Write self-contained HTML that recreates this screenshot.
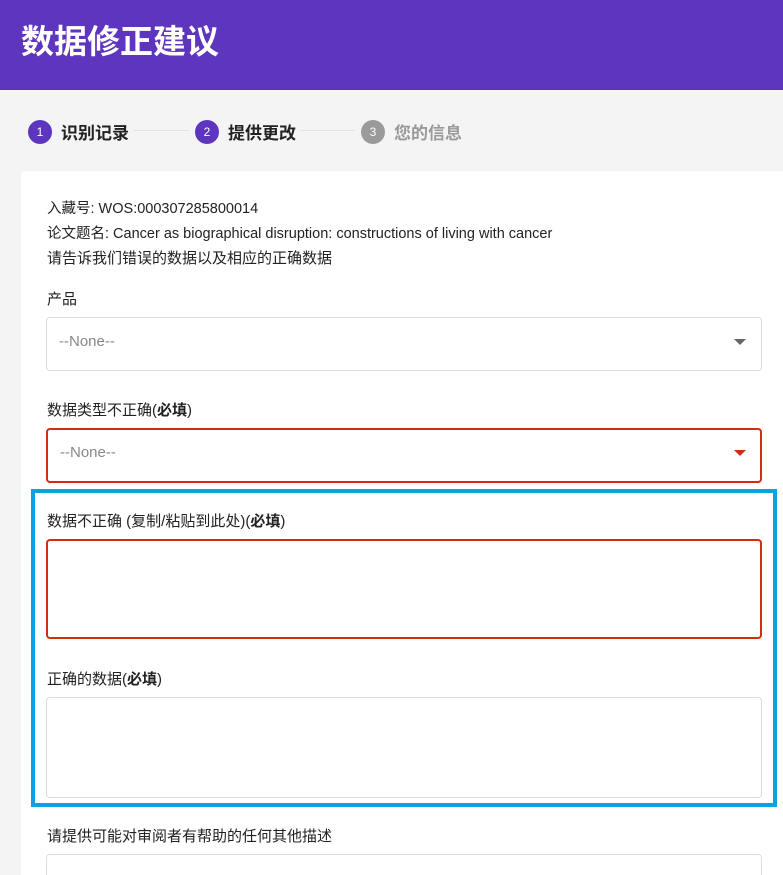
<!DOCTYPE html>
<html><head><meta charset="utf-8"><style>
*{box-sizing:border-box;margin:0;padding:0}
html{width:783px;height:875px;overflow:hidden}
body{width:783px;height:875px;overflow:hidden;background:#f4f4f4;font-family:"Liberation Sans","Noto Sans CJK SC",sans-serif;color:#222;position:relative}
.hdr{position:absolute;left:0;top:0;width:783px;height:90px;background:#5e35bf}
.hdr h1{position:absolute;left:21px;top:15px;color:#fff;font-size:33px;font-weight:bold}
.step{position:absolute;top:119px;display:flex;align-items:center;font-size:17px;font-weight:bold}
.c{width:24px;height:24px;border-radius:50%;background:#5e35bf;color:#fff;font-size:12px;font-weight:normal;display:flex;align-items:center;justify-content:center;margin-right:9px}
.line{position:absolute;top:130px;height:1px;background:#e2e2e2}
.card{position:absolute;left:21px;top:171px;width:762px;height:704px;background:#fff;border-radius:4px 0 0 0}
.t{position:absolute;left:47px;font-size:15px;line-height:20px}
.box{position:absolute;left:46px;width:716px;border:1px solid #ddd;border-radius:4px;background:#fff}
.red{border:2px solid #d42c0e}
.none{position:absolute;left:12px;top:15px;color:#888;font-size:15px}
.arr{position:absolute;right:15px;top:21px;width:0;height:0;border-left:6px solid transparent;border-right:6px solid transparent;border-top:6px solid #666}
.blue{position:absolute;left:31px;top:489px;width:746px;height:318px;border:4px solid #0aa2e0}
</style></head><body>
<div class="hdr"><h1>数据修正建议</h1></div>
<div class="step" style="left:28px"><div class="c">1</div>识别记录</div>
<div class="line" style="left:134px;width:55px"></div>
<div class="step" style="left:195px"><div class="c">2</div>提供更改</div>
<div class="line" style="left:300px;width:55px"></div>
<div class="step" style="left:361px;color:#999"><div class="c" style="background:#9a9a9a">3</div>您的信息</div>
<div class="card"></div>
<div class="t" style="top:199px;font-size:14.5px">入藏号: WOS:000307285800014</div>
<div class="t" style="top:224px;font-size:14.5px">论文题名: Cancer as biographical disruption: constructions of living with cancer</div>
<div class="t" style="top:249px">请告诉我们错误的数据以及相应的正确数据</div>
<div class="t" style="top:290px">产品</div>
<div class="box" style="top:317px;height:54px"><span class="none">--None--</span><span class="arr"></span></div>
<div class="t" style="top:401px">数据类型不正确(<b>必填</b>)</div>
<div class="box red" style="top:428px;height:55px"><span class="none" style="top:14px">--None--</span><span class="arr" style="border-top-color:#d42c0e;top:20px;right:14px"></span></div>
<div class="blue"></div>
<div class="t" style="top:512px">数据不正确 (复制/粘贴到此处)(<b>必填</b>)</div>
<div class="box red" style="top:539px;height:100px"></div>
<div class="t" style="top:670px">正确的数据(<b>必填</b>)</div>
<div class="box" style="top:697px;height:101px"></div>
<div class="t" style="top:827px">请提供可能对审阅者有帮助的任何其他描述</div>
<div class="box" style="top:854px;height:21px;border-bottom:none;border-radius:4px 4px 0 0"></div>
</body></html>
